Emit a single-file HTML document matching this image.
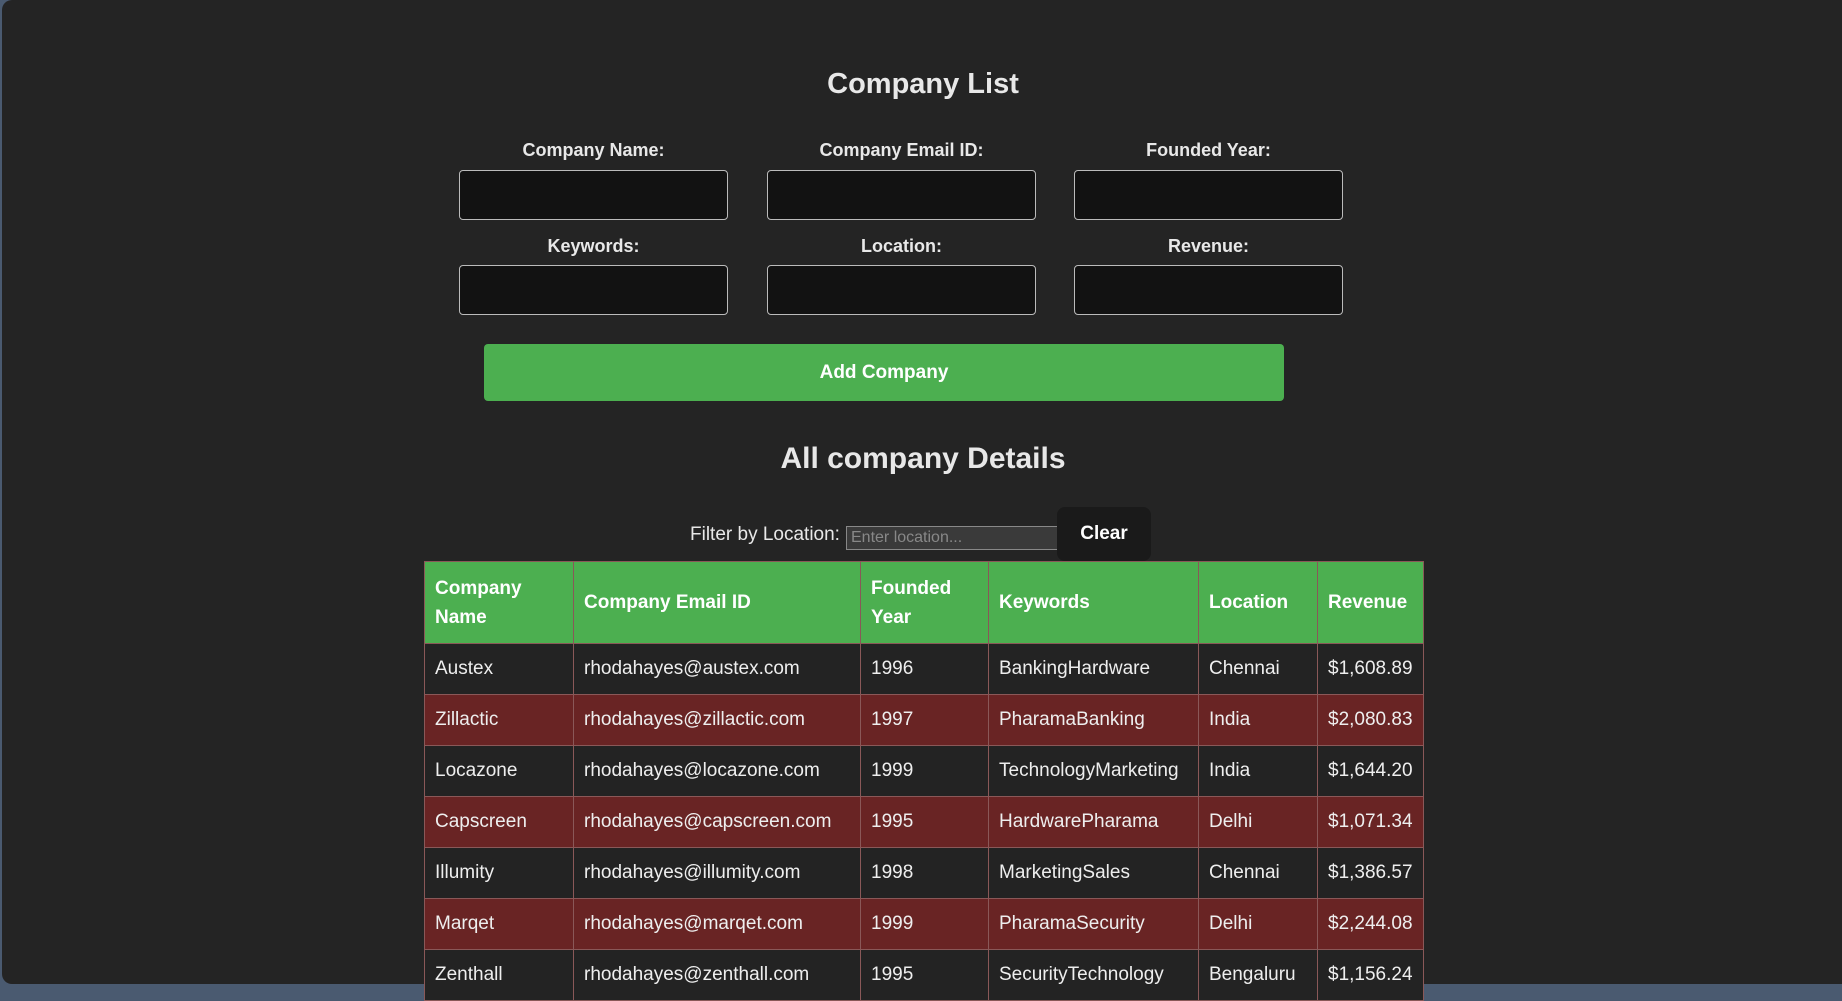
<!DOCTYPE html>
<html><head><meta charset="utf-8"><style>
html,body{margin:0;padding:0;width:1842px;height:989px;background:#4a5a70;overflow:hidden;font-family:"Liberation Sans",sans-serif;}
.panel{position:absolute;left:2px;top:0;width:1840px;height:984px;background:#242424;border-radius:10px 0 0 10px;color:#eee;}
.abs{position:absolute;}
h1{position:absolute;left:0;width:1842px;top:68px;margin:0;text-align:center;font-size:29px;font-weight:bold;color:#e8e8e8;}
h2{position:absolute;left:0;width:1842px;top:442px;margin:0;text-align:center;font-size:30px;font-weight:bold;color:#e8e8e8;}
.lbl{position:absolute;width:269px;text-align:center;font-size:18px;font-weight:bold;color:#e8e8e8;}
.inp{position:absolute;width:267px;height:48px;background:#121212;border:1px solid #bbb;border-radius:4px;}
.btn{position:absolute;left:484px;top:344px;width:800px;height:57px;background:#4caf50;border-radius:4px;color:#fff;font-size:19px;font-weight:bold;text-align:center;line-height:57px;}
table{position:absolute;left:422px;top:561px;width:999px;border-collapse:collapse;table-layout:fixed;font-size:19px;color:#eee;}
td,th{border:1px solid #8a5858;padding:0 10px;text-align:left;white-space:nowrap;overflow:hidden;}
th{background:#4caf50;color:#fff;font-weight:bold;height:81px;line-height:29px;white-space:normal;}
td{height:50px;}
tr.r td{background:#692424;}
tr.d td{background:#232323;}
</style></head><body><div class="panel">
<h1>Company List</h1>
<div class="lbl" style="left:457px;top:140px">Company Name:</div>
<div class="lbl" style="left:765px;top:140px">Company Email ID:</div>
<div class="lbl" style="left:1072px;top:140px">Founded Year:</div>
<div class="inp" style="left:457px;top:170px"></div>
<div class="inp" style="left:765px;top:170px"></div>
<div class="inp" style="left:1072px;top:170px"></div>
<div class="lbl" style="left:457px;top:236px">Keywords:</div>
<div class="lbl" style="left:765px;top:236px">Location:</div>
<div class="lbl" style="left:1072px;top:236px">Revenue:</div>
<div class="inp" style="left:457px;top:265px"></div>
<div class="inp" style="left:765px;top:265px"></div>
<div class="inp" style="left:1072px;top:265px"></div>
<div class="btn" style="left:482px">Add Company</div>
<h2>All company Details</h2>
<div class="abs" style="left:688px;top:524px;font-size:19px;color:#e8e8e8">Filter by Location:</div>
<div class="abs" style="left:844px;top:526px;width:208px;height:22px;background:#3a3a3a;border:1px solid #888;font-size:16px;color:#888;line-height:22px;padding-left:4px;box-sizing:content-box">Enter location...</div>
<div class="abs" style="left:1055px;top:507px;width:94px;height:54px;background:#1a1a1a;border-radius:8px;color:#fff;font-size:19px;font-weight:bold;text-align:center;line-height:54px">Clear</div>
<table>
<colgroup><col style="width:149px"><col style="width:287px"><col style="width:128px"><col style="width:210px"><col style="width:119px"><col style="width:106px"></colgroup>
<tr><th>Company Name</th><th>Company Email ID</th><th>Founded Year</th><th>Keywords</th><th>Location</th><th>Revenue</th></tr>
<tr class="d"><td>Austex</td><td>rhodahayes@austex.com</td><td>1996</td><td>BankingHardware</td><td>Chennai</td><td>$1,608.89</td></tr>
<tr class="r"><td>Zillactic</td><td>rhodahayes@zillactic.com</td><td>1997</td><td>PharamaBanking</td><td>India</td><td>$2,080.83</td></tr>
<tr class="d"><td>Locazone</td><td>rhodahayes@locazone.com</td><td>1999</td><td>TechnologyMarketing</td><td>India</td><td>$1,644.20</td></tr>
<tr class="r"><td>Capscreen</td><td>rhodahayes@capscreen.com</td><td>1995</td><td>HardwarePharama</td><td>Delhi</td><td>$1,071.34</td></tr>
<tr class="d"><td>Illumity</td><td>rhodahayes@illumity.com</td><td>1998</td><td>MarketingSales</td><td>Chennai</td><td>$1,386.57</td></tr>
<tr class="r"><td>Marqet</td><td>rhodahayes@marqet.com</td><td>1999</td><td>PharamaSecurity</td><td>Delhi</td><td>$2,244.08</td></tr>
<tr class="d"><td>Zenthall</td><td>rhodahayes@zenthall.com</td><td>1995</td><td>SecurityTechnology</td><td>Bengaluru</td><td>$1,156.24</td></tr>
</table>
</div></body></html>
